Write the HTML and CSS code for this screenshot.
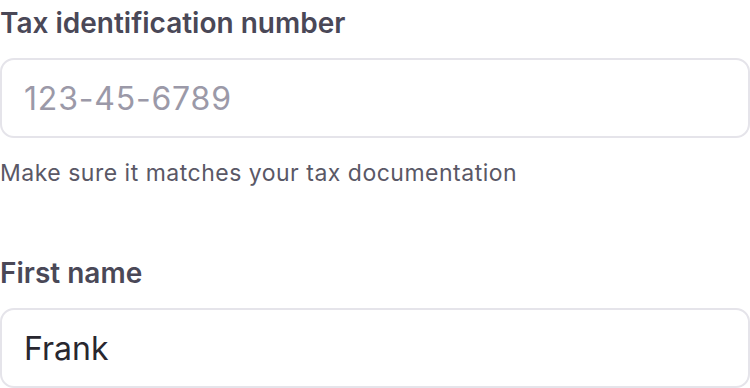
FILE: index.html
```html
<!DOCTYPE html>
<html lang="en">
<head>
    <meta charset="UTF-8">
    <meta name="viewport" content="width=device-width, initial-scale=1.0">
    <title>Tax details</title>
    <link rel="stylesheet" href="styles.css">
</head>
<body>
    <form class="form">
        <!-- Tax ID -->
        <div class="field">
            <label class="field-label" for="taxId">Tax identification number</label>
            <input class="field-input" id="taxId" type="text" placeholder="123-45-6789">
            <p class="field-help">Make sure it matches your tax documentation</p>
        </div>

        <!-- First name -->
        <div class="field">
            <label class="field-label" for="firstName">First name</label>
            <input class="field-input" id="firstName" type="text" value="Frank">
        </div>
    </form>
</body>
</html>
```

FILE: styles.css
```css
body {
    margin: 0;
    font-family: Inter, "Noto Sans", sans-serif;
    background-color: white;
}

.form {
    display: flex;
    flex-direction: column;
    gap: 62px;
}

.field {
    display: flex;
    flex-direction: column;
}

.field-label {
    font-size: 28px;
    line-height: 46px;
    font-weight: 600;
    color: #4a4857;
    margin-bottom: 12px;
}

.field-input {
    box-sizing: border-box;
    width: 750px;
    height: 80px;
    margin: 0;
    padding: 0 22px;
    border: 2px solid #e5e4ea;
    border-radius: 14px;
    font-family: inherit;
    font-size: 32px;
    color: #28272f;
    background-color: white;
    outline: none;
}

.field-input::placeholder {
    color: #9b99a8;
    letter-spacing: 0.8px;
}

.field-help {
    margin: 20px 0 0;
    font-size: 23px;
    line-height: 30px;
    letter-spacing: 0.5px;
    color: #5a5866;
}
```
